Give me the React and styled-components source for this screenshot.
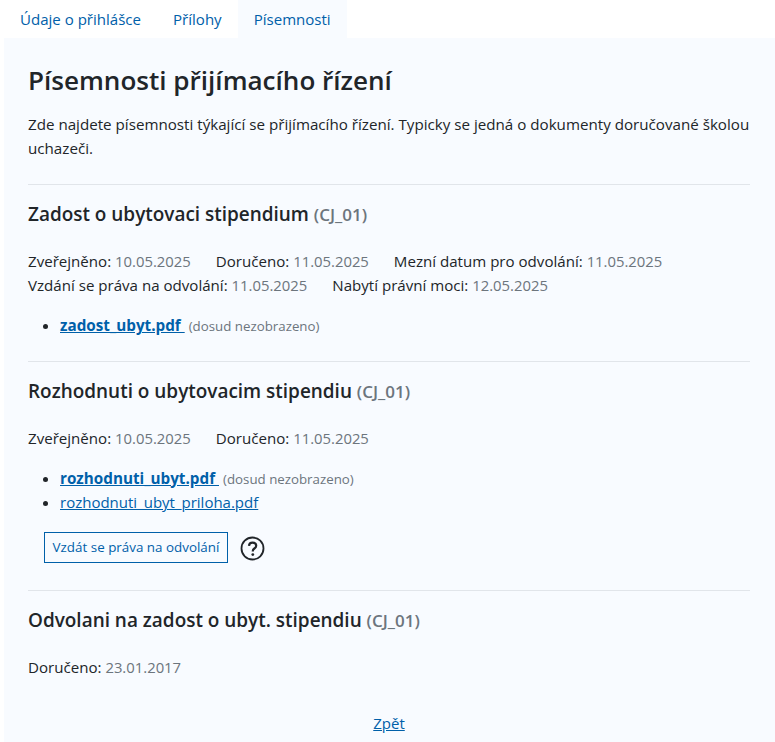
import React from "react";
import styled, { createGlobalStyle } from "styled-components";

const Global = createGlobalStyle`
  html, body { margin: 0; padding: 0; background: #fff; }
  body { font-family: "Open Sans", "Noto Sans", "Liberation Sans", sans-serif; font-size: 15px; line-height: 24px; color: #212529; }
  * { box-sizing: border-box; }
`;
const Page = styled.div`width: 775px; height: 742px; overflow: hidden; padding-left: 4px;`;
const Tabs = styled.nav`display: flex; height: 38px; padding-left: 0;`;
const Tab = styled.a`
  padding: 6px 16px 0; height: 38px; color: #0060a9; font-size: 15.05px; line-height: 26px;
  background: ${p => (p.$active ? "#f8fbff" : "transparent")};
`;
const Panel = styled.main`background: #f8fbff; height: 704px; padding: 23px 25px 0 24px;`;
const Title = styled.h1`margin: 0; font-size: 26.07px; line-height: 38px; font-weight: 600; color: #212529;`;
const Intro = styled.p`margin: 13px 0 0; font-size: 15.17px; line-height: 24px;`;
const Rule = styled.hr`border: 0; border-top: 1px solid #e1e5ea; margin: ${p => p.$top}px 0 0;`;
const Heading = styled.h2`margin: 16px 0 0; font-size: 18.95px; line-height: 26px; font-weight: 600;`;
const Code = styled.span`font-size: 17px; color: #6c757d; font-weight: 600;`;
const Meta = styled.div`margin-top: ${p => p.$top || 0}px; display: flex; gap: 25px; font-size: 15.1px; line-height: 24px;`;
const Value = styled.span`color: #6c757d; font-size: 14.85px;`;
const Files = styled.ul`margin: ${p => p.$top}px 0 0; padding: 0 0 0 32px; font-size: 15.25px; line-height: 23.5px;`;
const FileLink = styled.a`color: #0060a9; text-decoration: underline; font-weight: ${p => (p.$bold ? 700 : 400)}; font-size: ${p => (p.$bold ? "15.25px" : "15px")};`;
const Note = styled.span`color: #6c757d; font-size: 13.3px; margin-left: 4px;`;
const Actions = styled.div`display: flex; align-items: center; gap: 12px; margin: 17px 0 0 16px;`;
const Button = styled.button`
  height: 31px; width: 184px; padding: 0; border: 1px solid #0060a9; background: transparent; color: #0060a9;
  font: 400 13.4px/20px "Open Sans", "Noto Sans", sans-serif;
`;
const HelpIcon = styled.svg`margin-top: 3px;`;
const Back = styled.div`text-align: center; margin-top: 32px; font-size: 15.4px;`;

const Help = () => (
  <HelpIcon width="25" height="25" viewBox="0 0 25 25" fill="none">
    <circle cx="12.5" cy="12.5" r="11" stroke="#212529" strokeWidth="1.8" />
    <path d="M9 9.9c.1-2.1 1.6-3.2 3.6-3.2 2.1 0 3.6 1.2 3.6 3 0 1.4-.8 2.1-1.8 2.8-1 .7-1.6 1.2-1.6 2.4v.5" stroke="#212529" strokeWidth="2.2" />
    <circle cx="12.8" cy="18.6" r="1.4" fill="#212529" />
  </HelpIcon>
);

export default function App() {
  return (
    <Page>
      <Global />
      <Tabs>
        <Tab>Údaje o přihlášce</Tab>
        <Tab>Přílohy</Tab>
        <Tab $active>Písemnosti</Tab>
      </Tabs>
      <Panel>
        <Title>Písemnosti přijímacího řízení</Title>
        <Intro>Zde najdete písemnosti týkající se přijímacího řízení. Typicky se jedná o dokumenty doručované školou uchazeči.</Intro>
        <Rule $top={24} />
        <Heading>Zadost o ubytovaci stipendium <Code>(CJ_01)</Code></Heading>
        <Meta $top={21}>
          <span>Zveřejněno: <Value>10.05.2025</Value></span>
          <span>Doručeno: <Value>11.05.2025</Value></span>
          <span>Mezní datum pro odvolání: <Value>11.05.2025</Value></span>
        </Meta>
        <Meta>
          <span>Vzdání se práva na odvolání: <Value>11.05.2025</Value></span>
          <span>Nabytí právní moci: <Value>12.05.2025</Value></span>
        </Meta>
        <Files $top={17}>
          <li><FileLink $bold>zadost_ubyt.pdf </FileLink><Note>(dosud nezobrazeno)</Note></li>
        </Files>
        <Rule $top={22} />
        <Heading>Rozhodnuti o ubytovacim stipendiu <Code>(CJ_01)</Code></Heading>
        <Meta $top={21}>
          <span>Zveřejněno: <Value>10.05.2025</Value></span>
          <span>Doručeno: <Value>11.05.2025</Value></span>
        </Meta>
        <Files $top={17}>
          <li><FileLink $bold>rozhodnuti_ubyt.pdf </FileLink><Note>(dosud nezobrazeno)</Note></li>
          <li><FileLink>rozhodnuti_ubyt_priloha.pdf</FileLink></li>
        </Files>
        <Actions>
          <Button>Vzdát se práva na odvolání</Button>
          <Help />
        </Actions>
        <Rule $top={27} />
        <Heading>Odvolani na zadost o ubyt. stipendiu <Code>(CJ_01)</Code></Heading>
        <Meta $top={21}>
          <span>Doručeno: <Value>23.01.2017</Value></span>
        </Meta>
        <Back><FileLink>Zpět</FileLink></Back>
      </Panel>
    </Page>
  );
}
